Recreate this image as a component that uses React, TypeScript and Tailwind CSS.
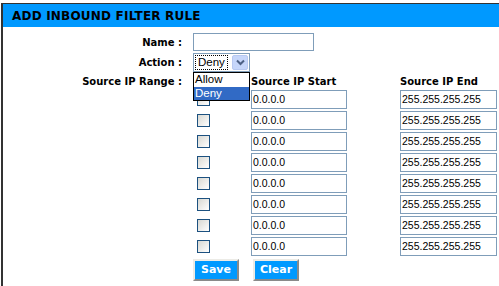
const rows = [0, 1, 2, 3, 4, 5, 6, 7];

function Checkbox() {
  return (
    <div className="ml-[4px] h-[13px] w-[13px] border border-[#1c5180] bg-linear-to-br from-[#d8d8d2] to-white" />
  );
}

function TextBox({ value, width }: { value: string; width: string }) {
  return (
    <div
      className={`${width} flex h-[19px] items-center border border-[#7f9db9] bg-white pl-[1px] font-['Liberation_Sans',Arial,sans-serif] text-[10.5px] text-black`}
    >
      {value}
    </div>
  );
}

function Button({ text }: { text: string }) {
  return (
    <div className="flex h-[22px] w-[46px] items-center justify-center border-2 border-t-[#ecebe6] border-l-[#ecebe6] border-r-[#8a8a8a] border-b-[#8a8a8a] bg-[#0099ff] text-[11px] font-bold text-white">
      {text}
    </div>
  );
}

export default function App() {
  return (
    <div className="h-[286px] w-[499px] overflow-hidden bg-white pt-[3px] pl-[1px] font-['DejaVu_Sans',Verdana,sans-serif] text-black">
      <div className="h-full border-t border-l-2 border-[#333]">
        <div className="flex h-[23px] items-center bg-[#0099ff] pl-[9px] text-[12px] font-bold tracking-[0.2px]">
          ADD INBOUND FILTER RULE
        </div>

        <div className="flex flex-col pt-[6px]">
          {/* Name */}
          <div className="flex h-[18px] items-center">
            <div className="w-[179px] text-right text-[10px] font-bold">Name :</div>
            <div className="ml-[11px] h-[18px] w-[121px] border border-[#7f9db9] bg-white" />
          </div>

          {/* Action */}
          <div className="mt-[2px] flex h-[19px] items-center">
            <div className="w-[179px] text-right text-[10px] font-bold">Action :</div>
            <div className="ml-[11px] flex h-[19px] w-[57px] items-center border border-[#7f9db9] bg-white pl-[1px] font-['Liberation_Sans',Arial,sans-serif] text-[11.5px]">
              <div className="flex h-[15px] w-[33px] items-center border border-dotted border-black pl-[2px]">
                Deny
              </div>
              <div className="ml-[4px] flex h-[15px] w-[16px] items-center justify-center rounded-[2px] border border-[#b8c9f1] bg-[#c6d6fa]">
                <svg width="9" height="7" viewBox="0 0 9 7">
                  <path d="M1 1.5 L4.5 5 L8 1.5" fill="none" stroke="#4d6185" strokeWidth="2" />
                </svg>
              </div>
            </div>
          </div>

          {/* Source IP range */}
          <div className="flex">
            <div className="flex h-[18px] w-[179px] items-center justify-end text-[10px] font-bold">
              Source IP Range :
            </div>
            <div className="relative ml-[11px] flex flex-col">
              <div className="absolute top-0 left-0 z-10 flex w-[57px] flex-col border border-black bg-white font-['Liberation_Sans',Arial,sans-serif] text-[11.5px]">
                <div className="flex h-[14px] items-center pl-[1px]">Allow</div>
                <div className="flex h-[13px] items-center bg-[#316ac5] pl-[1px] text-white">Deny</div>
              </div>

              <div className="flex h-[18px] items-center text-[10px] font-bold">
                <div className="w-[58px]" />
                <div className="w-[149px]">Source IP Start</div>
                <div>Source IP End</div>
              </div>

              <div className="flex flex-col gap-[2px]">
                {rows.map((i) => (
                  <div key={i} className="flex h-[19px] items-center">
                    <div className="w-[58px]">
                      <Checkbox />
                    </div>
                    <TextBox value="0.0.0.0" width="w-[96px]" />
                    <div className="w-[53px]" />
                    <TextBox value="255.255.255.255" width="w-[97px]" />
                  </div>
                ))}
              </div>

              <div className="mt-[3px] flex gap-[14px]">
                <Button text="Save" />
                <Button text="Clear" />
              </div>
            </div>
          </div>
        </div>
      </div>
    </div>
  );
}
